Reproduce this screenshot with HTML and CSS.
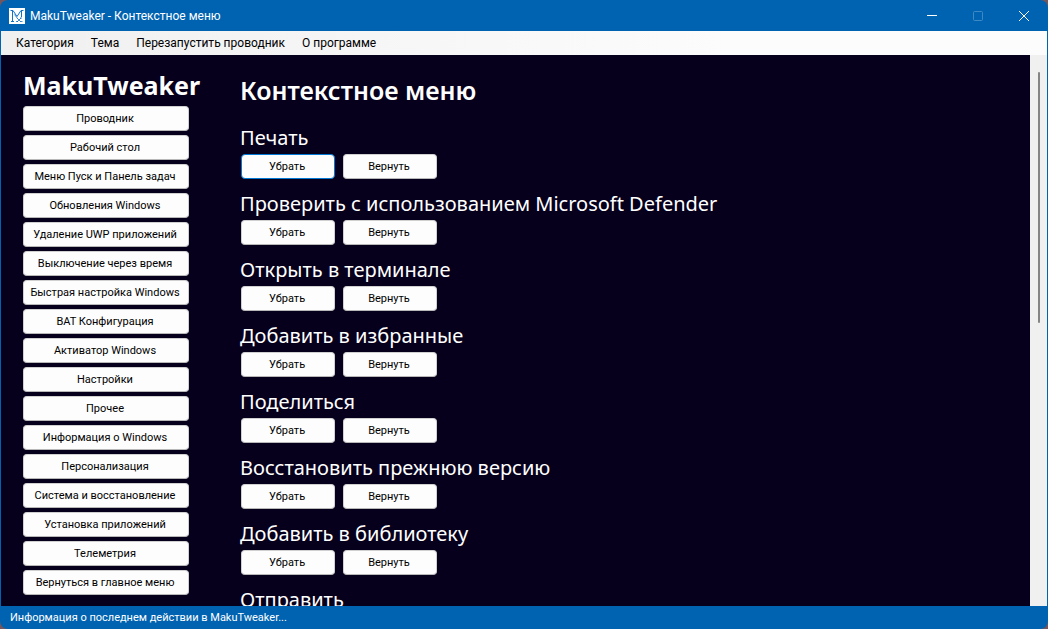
FILE: index.html
```html
<!DOCTYPE html>
<html lang="ru">
<head>
<meta charset="utf-8">
<title>MakuTweaker - Контекстное меню</title>
<link rel="stylesheet" href="styles.css">
</head>
<body>
<div class="window">
  <header class="titlebar">
    <svg class="logo" viewBox="0 0 16 16" aria-hidden="true">
      <path fill="#fff" d="M0 0h16v16H0z"/>
      <path fill="none" stroke="#1272c4" d="M1.500 2.500h2.500l4 6 4-6h2.500M3.500 3v10M2 13.500h3M12.500 3v6"/>
      <path fill="none" stroke="#1272c4" stroke-width=".8" d="M5.500 6.500l3 4M8 10l4 4M12 10l-4 4M7 13.500h2M11.500 13.500h2M11 10h2"/>
    </svg>
    <span class="caption">MakuTweaker - Контекстное меню</span>
    <div class="controls">
      <button class="control" aria-label="Свернуть"><svg viewBox="0 0 12 12"><path d="M1 5.500h10"/></svg></button>
      <button class="control" aria-label="Развернуть" disabled><svg viewBox="0 0 12 12"><rect x="1.500" y="1.500" width="9" height="9" rx="1"/></svg></button>
      <button class="control" aria-label="Закрыть"><svg viewBox="0 0 12 12"><path d="M1 1l10 10M11 1L1 11"/></svg></button>
    </div>
  </header>
  <nav class="menubar">
    <button class="menu-item">Категория</button>
    <button class="menu-item">Тема</button>
    <button class="menu-item">Перезапустить проводник</button>
    <button class="menu-item">О программе</button>
  </nav>
  <div class="body">
    <aside class="sidebar">
      <h1 class="brand">MakuTweaker</h1>
      <nav class="categories">
        <button class="button">Проводник</button>
        <button class="button">Рабочий стол</button>
        <button class="button">Меню Пуск и Панель задач</button>
        <button class="button">Обновления Windows</button>
        <button class="button">Удаление UWP приложений</button>
        <button class="button">Выключение через время</button>
        <button class="button">Быстрая настройка Windows</button>
        <button class="button">BAT Конфигурация</button>
        <button class="button">Активатор Windows</button>
        <button class="button">Настройки</button>
        <button class="button">Прочее</button>
        <button class="button">Информация о Windows</button>
        <button class="button">Персонализация</button>
        <button class="button">Система и восстановление</button>
        <button class="button">Установка приложений</button>
        <button class="button">Телеметрия</button>
        <button class="button">Вернуться в главное меню</button>
      </nav>
    </aside>
    <main class="content">
      <h2 class="heading">Контекстное меню</h2>
      <section class="option"><h3 class="option-title">Печать</h3><div class="actions"><button class="button button-focus">Убрать</button><button class="button">Вернуть</button></div></section>
      <section class="option"><h3 class="option-title">Проверить с использованием Microsoft Defender</h3><div class="actions"><button class="button">Убрать</button><button class="button">Вернуть</button></div></section>
      <section class="option"><h3 class="option-title">Открыть в терминале</h3><div class="actions"><button class="button">Убрать</button><button class="button">Вернуть</button></div></section>
      <section class="option"><h3 class="option-title">Добавить в избранные</h3><div class="actions"><button class="button">Убрать</button><button class="button">Вернуть</button></div></section>
      <section class="option"><h3 class="option-title">Поделиться</h3><div class="actions"><button class="button">Убрать</button><button class="button">Вернуть</button></div></section>
      <section class="option"><h3 class="option-title">Восстановить прежнюю версию</h3><div class="actions"><button class="button">Убрать</button><button class="button">Вернуть</button></div></section>
      <section class="option"><h3 class="option-title">Добавить в библиотеку</h3><div class="actions"><button class="button">Убрать</button><button class="button">Вернуть</button></div></section>
      <section class="option"><h3 class="option-title">Отправить</h3></section>
    </main>
    <div class="scrollbar"><div class="thumb"></div></div>
  </div>
  <footer class="status">Информация о последнем действии в MakuTweaker...</footer>
</div>
</body>
</html>
```
FILE: styles.css
```css
* {
  box-sizing: border-box;
}

body {
  margin: 0;
  background: #74565c;
  font-family: "Noto Sans", "Open Sans", sans-serif;
  color: #fff;
}

button {
  font: inherit;
  color: inherit;
}

.window {
  display: flex;
  flex-direction: column;
  height: 100vh;
  overflow: hidden;
  border-radius: 8px;
  background: #0063b1;
}

.titlebar {
  display: flex;
  align-items: center;
  flex: none;
  height: 31px;
  padding: 0 1px 0 9px;
}

.logo {
  width: 16px;
  height: 16px;
}

.caption {
  flex: 1;
  padding-left: 5px;
  font-family: Roboto, "Noto Sans", sans-serif;
  font-size: 12px;
  line-height: 16px;
}

.controls {
  display: flex;
  align-self: stretch;
}

.control {
  display: grid;
  place-items: center;
  width: 46px;
  padding: 0;
  border: 0;
  background: none;
}

.control:disabled {
  opacity: 0.25;
}

.control svg {
  width: 12px;
  height: 12px;
  fill: none;
  stroke: #fff;
}

.menubar {
  display: flex;
  flex: none;
  height: 24px;
  margin: 0 1px;
  padding-left: 10px;
  background: linear-gradient(90deg, #f0f0f0, #fcfcfc 70%);
  color: #000;
  font-family: Roboto, "Noto Sans", sans-serif;
  font-size: 12px;
}

.menu-item {
  padding: 0 5px;
  margin-right: 7px;
  border: 0;
  background: none;
}

.body {
  display: flex;
  flex: 1;
  min-height: 0;
  margin: 0 1px;
  background: #06001c;
}

.sidebar {
  flex: none;
  width: 216px;
  padding: 14px 0 0 22px;
}

.brand {
  margin: 0;
  font-size: 25px;
  line-height: 33px;
  font-weight: 700;
}

.categories {
  display: grid;
  gap: 4px;
  width: 166px;
  padding-top: 4px;
}

.button {
  height: 25px;
  padding: 1px 2px 0 0;
  border: 1px solid #d0d0d0;
  border-bottom-color: #b8b8b8;
  border-radius: 4px;
  background: #fdfdfd;
  color: #000;
  font-family: Roboto, "Liberation Sans", sans-serif;
  font-size: 11px;
  line-height: 16px;
  white-space: nowrap;
}

.button-focus {
  border-color: #0078d4;
}

.content {
  flex: 1;
  min-width: 0;
  overflow: hidden;
  padding: 18px 0 0 23px;
}

.heading {
  margin: 0 0 16px;
  font-size: 25px;
  line-height: 34px;
  font-weight: 600;
}

.option {
  padding-bottom: 10px;
}

.option-title {
  margin: 0;
  font-size: 20px;
  line-height: 30px;
  font-weight: 400;
}

.actions {
  display: flex;
  gap: 8px;
  padding: 1px 0 0 1px;
}

.actions .button {
  width: 94px;
}

.scrollbar {
  flex: none;
  width: 17px;
  padding: 17px 7px 0 8px;
  background: #f0f0f0;
}

.thumb {
  height: 47%;
  border-radius: 1px;
  background: #858585;
}

.status {
  flex: none;
  height: 23px;
  padding-left: 10px;
  font-family: Roboto, "Liberation Sans", sans-serif;
  font-size: 11px;
  line-height: 23px;
}
```
